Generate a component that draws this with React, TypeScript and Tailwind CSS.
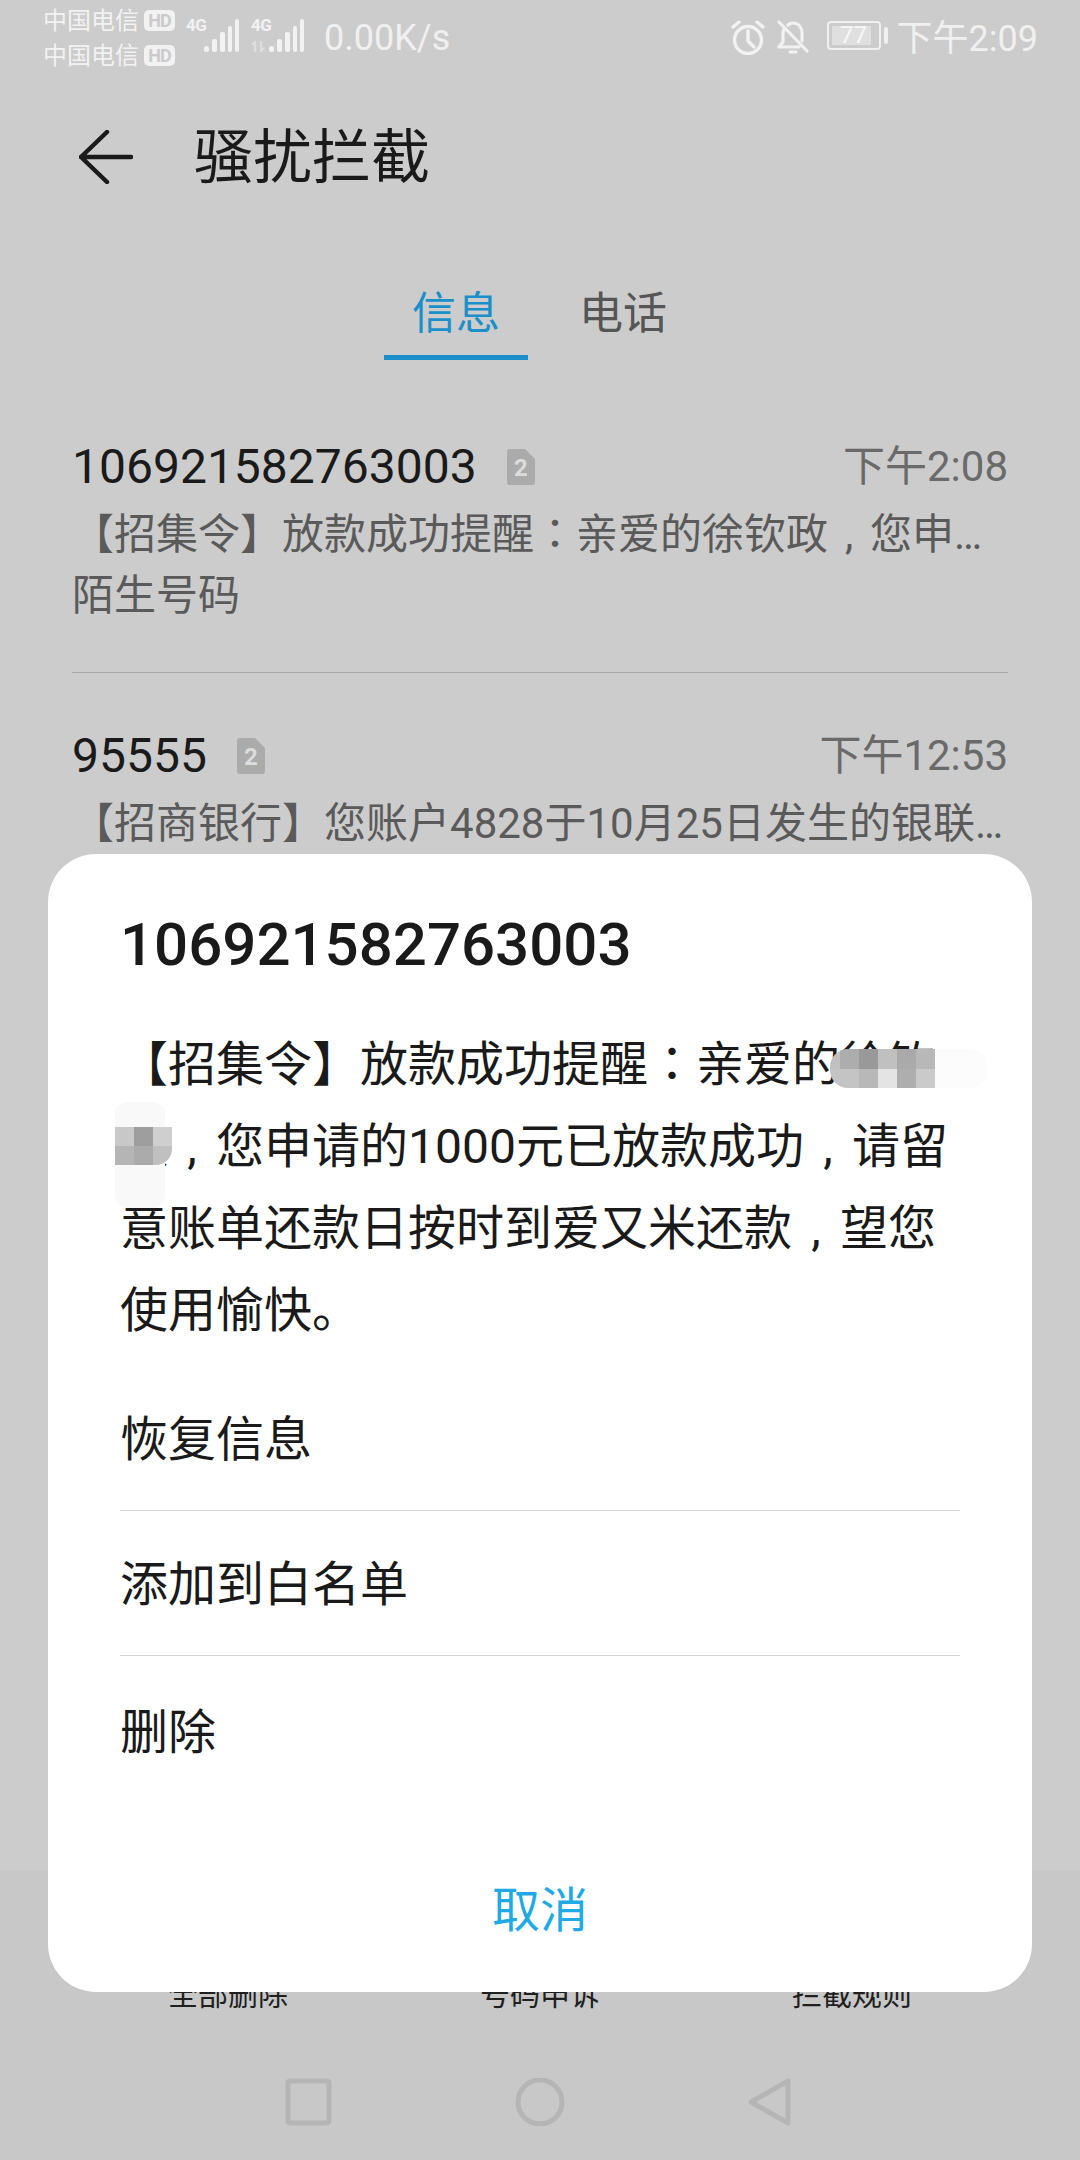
const sans = "font-['Roboto','Noto_Sans_CJK_SC',sans-serif]";

function Punct({ children }: { children: string }) {
  return <span className="font-['Noto_Sans_CJK_KR',sans-serif] leading-none">{children}</span>;
}

// comma sits centred in its full-width cell in the reference
function Comma() {
  return <span className="inline-block w-[1em] text-center leading-none">,</span>;
}

function HdBadge() {
  return (
    <span className="flex h-[21px] w-[31px] items-center justify-center rounded-[5px] bg-[#f2f2f2] text-[18px] leading-none font-bold tracking-[-1px] text-[#cbcbcb]">
      HD
    </span>
  );
}

function Signal({ dim }: { dim?: boolean }) {
  return (
    <span className="relative flex w-[53px] flex-col">
      <span className="h-[15px] text-[17px] leading-[15px] font-bold tracking-[-0.5px] text-[#f2f2f2]">4G</span>
      {dim && (
        <svg className="absolute top-[23px] left-0" width="15" height="11" viewBox="0 0 15 11" fill="none" stroke="#dedede" strokeWidth="2.4">
          <path d="M4 11V1L1 4M10 0v10l3-3" />
        </svg>
      )}
      <svg className="absolute top-[1px] left-[18px]" width="35" height="34" viewBox="0 0 35 34" fill="#f2f2f2">
        <rect x="0" y="27" width="5" height="6" rx="2.5" />
        <rect x="8" y="20" width="5" height="13" rx="2" />
        <rect x="16" y="13" width="5" height="20" rx="2" />
        <rect x="24" y="7" width="4" height="26" rx="2" />
        <rect x="31" y="0" width="4" height="33" rx="2" />
      </svg>
    </span>
  );
}

function SimBadge() {
  return (
    <svg width="28" height="36" viewBox="0 0 28 36">
      <path d="M3 0h15l10 10v23a3 3 0 0 1-3 3H3a3 3 0 0 1-3-3V3a3 3 0 0 1 3-3z" fill="#ababab" />
      <text x="14" y="27" textAnchor="middle" fontSize="24" fontWeight="700" fontFamily="Roboto" fill="#dcdcdc">2</text>
    </svg>
  );
}

function StatusBar() {
  return (
    <div className="flex h-[72px] items-start justify-between pt-[7px] pr-[42px] pl-[43px]">
      <div className="flex items-start">
        <div className="flex flex-col gap-[12px] pt-[2px]">
          <div className="flex h-[23px] items-center gap-[5px] text-[24px] leading-none text-[#f2f2f2]">
            中国电信 <HdBadge />
          </div>
          <div className="flex h-[23px] items-center gap-[5px] text-[24px] leading-none text-[#f2f2f2]">
            中国电信 <HdBadge />
          </div>
        </div>
        <div className="mt-[11px] ml-[11px] flex gap-[12px]">
          <Signal />
          <Signal dim />
        </div>
        <span className="mt-[11px] ml-[20px] text-[36px] leading-[40px] font-normal text-[#f0f0f0]">0.00K/s</span>
      </div>
      <div className="flex items-start">
        <svg className="mt-[12px]" width="34" height="36" viewBox="0 0 34 36" fill="none" stroke="#f2f2f2" strokeWidth="3.4" strokeLinecap="round">
          <circle cx="17" cy="21" r="13.5" />
          <path d="M17 12v10l6 6M2 8l6-5M32 8l-6-5" />
        </svg>
        <svg className="mt-[12px] ml-[12px]" width="32" height="36" viewBox="0 0 32 36" fill="none" stroke="#f2f2f2" strokeWidth="3.2" strokeLinecap="round" strokeLinejoin="round">
          <path d="M7 10c-1 2-1 4-1 6v7l-4 5h20M11 6c1-1 3-2 5-2 6 0 9 5 9 10v8" />
          <path d="M2 3l28 29M13 33h6" />
        </svg>
        <div className="mt-[14px] ml-[18px] flex items-center gap-[3px]">
          <div className="relative h-[29px] w-[54px] rounded-[4px] border-2 border-[#f0f0f0] p-[3px]">
            <div className="h-full w-[39px] bg-[#dfdfdf]" />
            <span className="absolute inset-0 text-center text-[24px] leading-[25px] font-normal text-[#f7f7f7]">77</span>
          </div>
          <div className="h-[17px] w-[4px] rounded-[2px] bg-[#f0f0f0]" />
        </div>
        <span className="mt-[11px] ml-[9px] text-[36px] leading-[42px] font-normal text-[#f0f0f0]">下午2:09</span>
      </div>
    </div>
  );
}

function ListRow({ num, time, preview, sub }: { num: string; time: string; preview: React.ReactNode; sub?: string }) {
  return (
    <div className="px-[72px]">
      <div className="flex h-[64px] items-center">
        <span className="text-[48px] leading-none text-[#1a1a1a]">{num}</span>
        <span className="ml-[30px]"><SimBadge /></span>
        <span className="ml-auto text-[42px] leading-none text-[#6a6a6a]">{time}</span>
      </div>
      <div className="mt-[6px] h-[60px] text-[42px] leading-[60px] whitespace-nowrap text-[#5a5a5a]">{preview}</div>
      {sub && <div className="h-[62px] text-[42px] leading-[62px] text-[#5a5a5a]">{sub}</div>}
    </div>
  );
}

export default function App() {
  return (
    <div className={`relative flex h-[2160px] w-[1080px] flex-col overflow-hidden bg-[#cccccc] ${sans}`}>
      <StatusBar />

      <header className="mt-[52px] flex h-[66px] items-center pl-[79px]">
        <svg width="54" height="54" viewBox="0 0 54 54" fill="none" stroke="#1a1a1a" strokeWidth="4.5" strokeLinecap="round" strokeLinejoin="round">
          <path d="M28 2L2 27l26 25M2 27h50" />
        </svg>
        <h1 className="ml-[61px] text-[59px] leading-none font-normal text-[#1a1a1a]">骚扰拦截</h1>
      </header>

      <div className="mt-[58px] flex pl-[384px]">
        <span className="flex h-[112px] w-[144px] justify-center border-b-[5px] border-[#1a8fc9] text-[44px] leading-[132px] text-[#1a8fc9]">信息</span>
        <span className="ml-[51px] text-[44px] leading-[132px] text-[#555555]">电话</span>
      </div>

      <div className="mt-[55px]">
        <ListRow
          num="106921582763003"
          time="下午2:08"
          preview={<><Punct>【</Punct>招集令<Punct>】</Punct>放款成功提醒<Punct>：</Punct>亲爱的徐钦政<Comma />您申…</>}
          sub="陌生号码"
        />
        <div className="mx-[72px] mt-[45px] h-px bg-[#a9a9a9]" />
        <div className="mt-[51px]">
          <ListRow
            num="95555"
            time="下午12:53"
            preview={<><Punct>【</Punct>招商银行<Punct>】</Punct>您账户4828于10月25日发生的银联…</>}
          />
        </div>
      </div>

      <div className="mt-auto flex h-[290px] flex-col bg-[#c8c8c8]">
        <div className="mt-[109px] grid grid-cols-3 px-[72px] text-center text-[30px] leading-[32px] text-[#1f1f1f]">
          <span>全部删除</span>
          <span>号码申诉</span>
          <span>拦截规则</span>
        </div>
        <div className="relative mt-[67px] h-[48px]">
          <svg className="absolute inset-0" width="1080" height="48" viewBox="0 0 1080 48" fill="none" stroke="#b5b5b5" strokeWidth="5" strokeLinejoin="round">
            <rect x="288" y="3" width="41" height="42" rx="2" />
            <circle cx="540" cy="24" r="22" />
            <path d="M788 3v42L751 24z" />
          </svg>
        </div>
      </div>

      {/* action sheet */}
      <div className="absolute top-[854px] left-[48px] h-[1138px] w-[984px] rounded-[48px] bg-white">
        <h2 className="mt-[56px] ml-[72px] text-[60px] leading-[70px] font-medium text-[#1a1a1a]">106921582763003</h2>
        <div className="relative mt-[44px] ml-[72px] text-[48px] leading-[82px] whitespace-nowrap text-[#1a1a1a]">
          <div><Punct>【</Punct>招集令<Punct>】</Punct>放款成功提醒<Punct>：</Punct>亲爱的徐钦</div>
          <div>政<Comma />您申请的1000元已放款成功<Comma />请留</div>
          <div>意账单还款日按时到爱又米还款<Comma />望您</div>
          <div>使用愉快。</div>
          {/* mosaic over the name */}
          <div className="absolute top-[25px] left-[815px] h-[39px] w-[52px] rounded-r-[16px] bg-[#fcfcfc]" />
          <div className="absolute top-[25px] left-[710px] grid h-[39px] w-[105px] grid-cols-[10px_repeat(5,19px)] grid-rows-2 overflow-hidden rounded-l-[18px]">
            <div className="bg-[#c0c0c0]" /><div className="bg-[#adadad]" /><div className="bg-[#999999]" /><div className="bg-[#c0c0c0]" /><div className="bg-[#aaaaaa]" /><div className="bg-[#b8b8b8]" />
            <div className="bg-[#c4c4c4]" /><div className="bg-[#c4c4c4]" /><div className="bg-[#b8b8b8]" /><div className="bg-[#e4e4e4]" /><div className="bg-[#aeaeae]" /><div className="bg-[#cacaca]" />
          </div>
          <div className="absolute top-[78px] left-[-5px] h-[106px] w-[50px] rounded-[12px] bg-[#f9f9f9]" />
          <div className="absolute top-[103px] left-[-5px] grid h-[38px] w-[57px] grid-cols-3 grid-rows-2 overflow-hidden rounded-br-[16px]">
            <div className="bg-[#c8c8c8]" /><div className="bg-[#9e9e9e]" /><div className="bg-[#cfcfcf]" />
            <div className="bg-[#b5b5b5]" /><div className="bg-[#ababab]" /><div className="bg-[#c0c0c0]" />
          </div>
        </div>
        <div className="mt-[53px]">
          <div className="ml-[72px] text-[48px] leading-[70px] text-[#1a1a1a]">恢复信息</div>
          <div className="mx-[72px] mt-[35px] h-px bg-[#d4d4d4]" />
          <div className="mt-[39px] ml-[72px] text-[48px] leading-[70px] text-[#1a1a1a]">添加到白名单</div>
          <div className="mx-[72px] mt-[35px] h-px bg-[#d4d4d4]" />
          <div className="mt-[42px] ml-[72px] text-[48px] leading-[70px] text-[#1a1a1a]">删除</div>
        </div>
        <div className="mt-[108px] text-center text-[48px] leading-[70px] text-[#1faae6]">取消</div>
      </div>
    </div>
  );
}
